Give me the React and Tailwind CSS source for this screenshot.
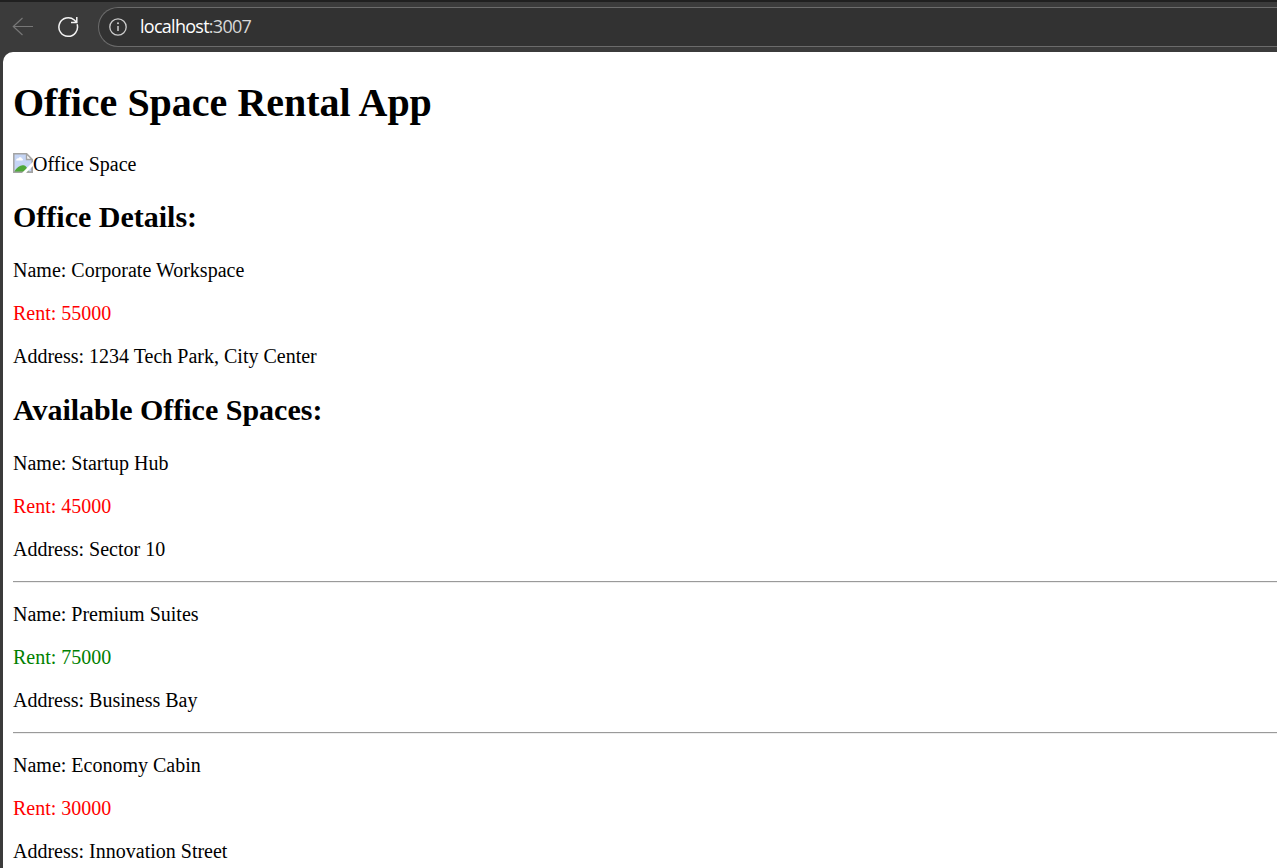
const office = { name: "Corporate Workspace", rent: 55000, address: "1234 Tech Park, City Center" };

const spaces = [
  { name: "Startup Hub", rent: 45000, address: "Sector 10" },
  { name: "Premium Suites", rent: 75000, address: "Business Bay" },
  { name: "Economy Cabin", rent: 30000, address: "Innovation Street" },
];

function Details({ item }) {
  return (
    <div className="flex flex-col gap-5">
      <p>Name: {item.name}</p>
      <p className={item.rent < 60000 ? "text-[#ff0000]" : "text-[#008000]"}>Rent: {item.rent}</p>
      <p>Address: {item.address}</p>
    </div>
  );
}

function MissingImage() {
  return (
    <svg className="mt-px h-5 w-5 shrink-0" viewBox="0 0 20 20">
      <path d="M1 1H13.5L19 6.5V19H1Z" fill="#c5d5f5" />
      <path d="M3.2 7.5C3 5.8 4.6 5.1 5.4 5.4C6 3.6 8.8 4 8.8 5.6C10.2 5.6 10.2 7.5 9.5 7.5Z" fill="#fff" />
      <path d="M1 19C3.5 14.5 7 12.2 9.5 12.2C12.5 12.2 14 14 16 19Z" fill="#4fa83a" />
      <path d="M0.8 0.8H13.5L19.2 6.5V19.2H0.8Z" fill="none" stroke="#a3a3a3" strokeWidth="1.5" />
      <path d="M13.5 0.8V6.5H19.2Z" fill="#f5f5f5" stroke="#a3a3a3" strokeWidth="1.3" />
      <path d="M20 8.8L9 20H13L20 13Z" fill="#fff" />
      <path d="M14.5 19.2H19.2V14.5" fill="none" stroke="#a3a3a3" strokeWidth="1.5" />
    </svg>
  );
}

function BrowserBar() {
  return (
    <header className="flex h-[52px] shrink-0 items-start border-t-2 border-[#202020] bg-[#3b3b3b] pt-[5px]">
      <div className="flex h-10 w-[98px] shrink-0 items-center pl-3">
        <svg className="h-5 w-[22px]" viewBox="0 0 22 20" fill="none" stroke="#777777" strokeWidth="1.2">
          <path d="M21 9.5H1.3M10.5 1L1.3 9.5L10.5 18" />
        </svg>
        <svg className="ml-[23px] h-[22px] w-[22px]" viewBox="0 0 22 22" fill="none" stroke="#f4f4f4" strokeWidth="1.5">
          <path d="M20.1 8.3A9.3 9.3 0 1 1 17.3 4L19.6 6.3M19.8 1V6.5H14" />
        </svg>
      </div>
      <div className="flex h-10 flex-1 items-center rounded-l-full border-[1.5px] border-r-0 border-[#6b6b6b] bg-[#323232] pl-[10px]">
        <svg className="h-[18px] w-[18px]" viewBox="0 0 18 18" fill="none" stroke="#cccccc" strokeWidth="1.3">
          <circle cx="9" cy="9" r="8.2" />
          <path d="M9 8V13" strokeWidth="1.5" />
          <circle cx="9" cy="5.3" r="1" fill="#cccccc" stroke="none" />
        </svg>
        <span className="mb-[2px] ml-[13px] font-['Open_Sans','Noto_Sans',sans-serif] text-[18px] leading-6 tracking-[-0.73px] text-[#d8d8d8]">
          <span className="text-white">localhost</span>:3007
        </span>
      </div>
    </header>
  );
}

export default function App() {
  return (
    <div className="flex h-[868px] flex-col overflow-hidden bg-[#3b3b3b]">
      <BrowserBar />
      <main className="ml-[3px] min-h-0 flex-1 overflow-hidden rounded-tl-[10px] bg-white pl-[10px] pt-7 font-['Liberation_Serif',serif] text-[20px] leading-[23px] text-black">
        <h1 className="text-[40px] font-bold leading-[46px]">Office Space Rental App</h1>
        <div className="mt-[26px] flex h-[23px]">
          <MissingImage />
          <span className="pt-px">Office Space</span>
        </div>
        <h2 className="my-[25px] text-[30px] font-bold leading-[34px]">Office Details:</h2>
        <Details item={office} />
        <h2 className="my-[25px] text-[30px] font-bold leading-[34px]">Available Office Spaces:</h2>
        {spaces.map((space) => (
          <div key={space.name}>
            <Details item={space} />
            <hr className="mb-5 mt-5 h-[2px] border-b border-t border-b-[#eeeeee] border-t-[#9a9a9a]" />
          </div>
        ))}
      </main>
    </div>
  );
}
